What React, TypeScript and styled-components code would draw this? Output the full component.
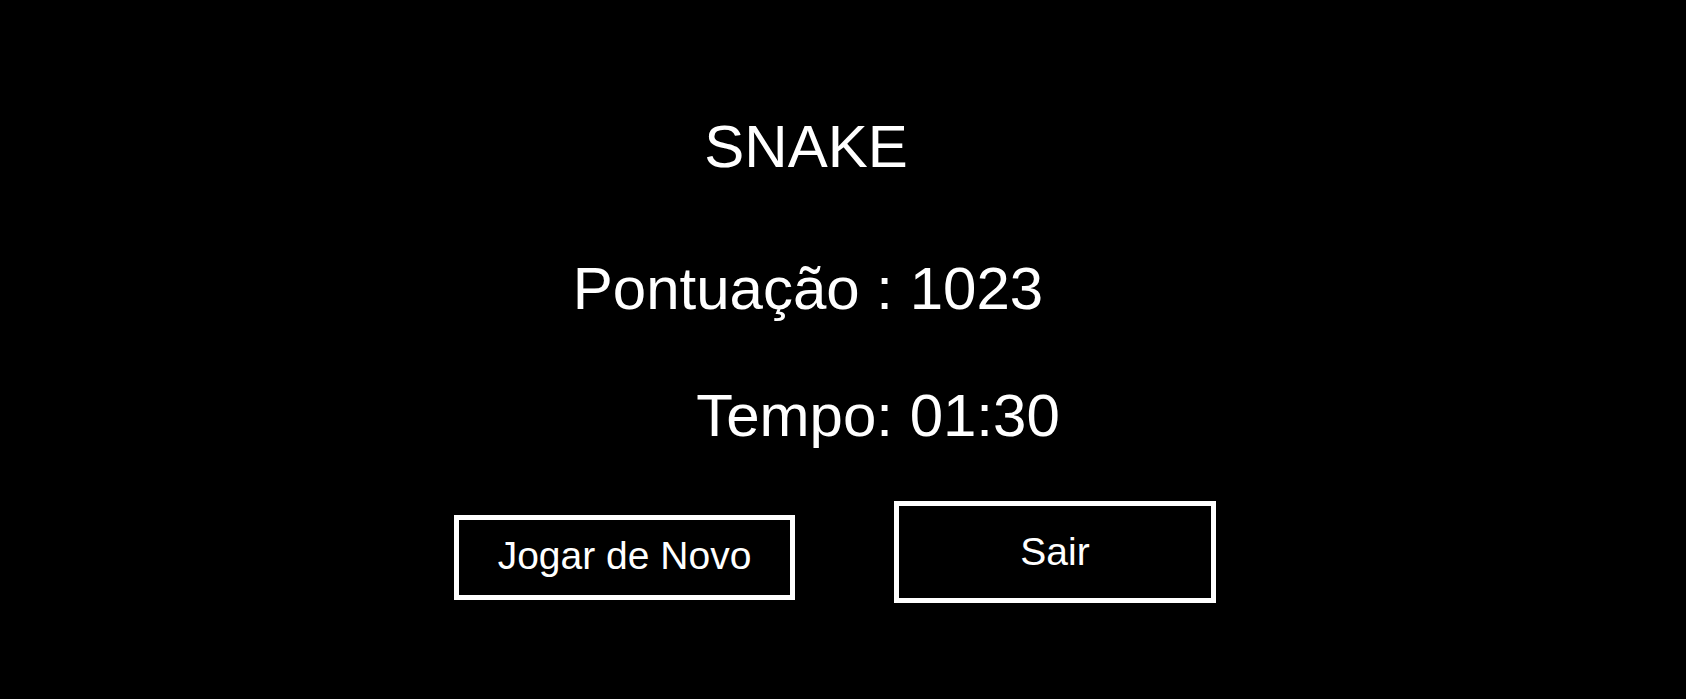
import React from "react";
import styled, { createGlobalStyle } from "styled-components";

const GlobalStyle = createGlobalStyle`
  html, body {
    margin: 0;
    padding: 0;
    background: #000;
  }
  body {
    font-family: "Liberation Sans", Arial, sans-serif;
    color: #fff;
  }
`;

const Page = styled.main`
  min-height: 100vh;
  box-sizing: border-box;
  background: #000;
  padding-top: 112px;
  display: flex;
  flex-direction: column;
`;

const Line = styled.div<{ $shift: number; $gap: number }>`
  font-size: 60px;
  line-height: 70px;
  height: 70px;
  color: #fff;
  text-align: center;
  white-space: pre;
  margin-top: ${(p) => p.$gap}px;
  padding-left: ${(p) => (p.$shift > 0 ? p.$shift * 2 : 0)}px;
  padding-right: ${(p) => (p.$shift < 0 ? -p.$shift * 2 : 0)}px;
`;

const ButtonRow = styled.div`
  display: flex;
  justify-content: center;
  align-items: flex-start;
  gap: 99px;
  margin-top: 50px;
  padding-right: 16px;
`;

const Button = styled.button<{ $w: number; $h: number; $top: number; $lift: number }>`
  box-sizing: border-box;
  width: ${(p) => p.$w}px;
  height: ${(p) => p.$h}px;
  margin-top: ${(p) => p.$top}px;
  border: 5px solid #fff;
  background: #000;
  color: #fff;
  font-family: "Liberation Sans", Arial, sans-serif;
  font-size: 39px;
  line-height: normal;
  padding: 0 0 ${(p) => p.$lift}px;
  display: flex;
  align-items: center;
  justify-content: center;
  cursor: pointer;
`;

export default function App() {
  return (
    <>
      <GlobalStyle />
      <Page>
        <Line $shift={-37} $gap={0}>SNAKE</Line>
        <Line $shift={-35} $gap={72}>Pontuação : 1023</Line>
        <Line $shift={35} $gap={57}>Tempo: 01:30</Line>
        <ButtonRow>
          <Button $w={341} $h={85} $top={14} $lift={3}>Jogar de Novo</Button>
          <Button $w={322} $h={102} $top={0} $lift={0}>Sair</Button>
        </ButtonRow>
      </Page>
    </>
  );
}
